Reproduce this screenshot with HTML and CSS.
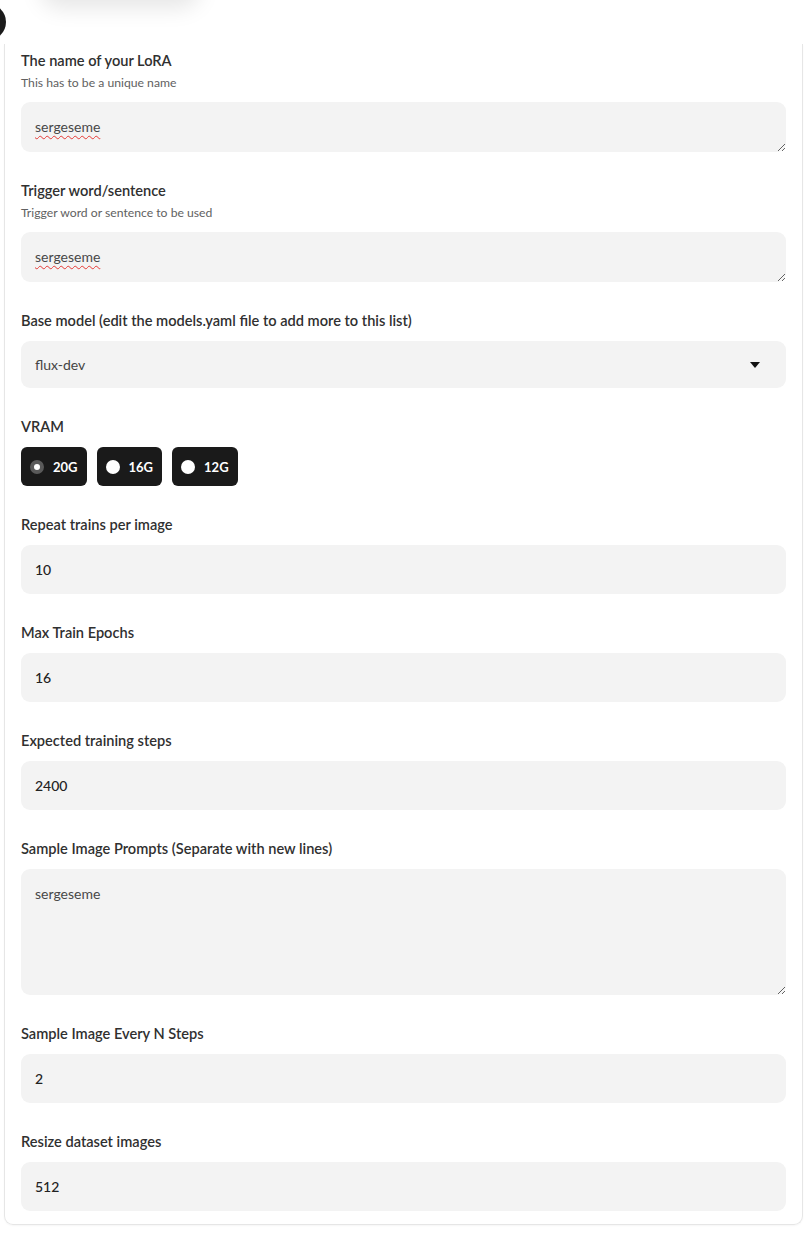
FILE: index.html
```html
<!DOCTYPE html>
<html>
<head>
<meta charset="utf-8">
<link rel="stylesheet" href="styles.css">
</head>
<body>
<div class="top-shadow"></div>
<div class="avatar"></div>
<div class="card">
  <div class="field">
    <div class="label with-info">The name of your LoRA</div>
    <div class="info">This has to be a unique name</div>
    <textarea class="ta ta-short spell" rows="1">sergeseme</textarea>
  </div>
  <div class="field">
    <div class="label with-info">Trigger word/sentence</div>
    <div class="info">Trigger word or sentence to be used</div>
    <textarea class="ta ta-short spell" rows="1">sergeseme</textarea>
  </div>
  <div class="field">
    <div class="label">Base model (edit the models.yaml file to add more to this list)</div>
    <div class="select">
      <span>flux-dev</span>
      <svg class="caret" width="10" height="6" viewBox="0 0 10 6"><path d="M0 0H10L5 6Z" fill="#111"/></svg>
    </div>
  </div>
  <div class="field">
    <div class="label">VRAM</div>
    <div class="radios">
      <div class="radio"><span class="dot dot-on"></span><span>20G</span></div>
      <div class="radio"><span class="dot"></span><span>16G</span></div>
      <div class="radio"><span class="dot"></span><span>12G</span></div>
    </div>
  </div>
  <div class="field">
    <div class="label">Repeat trains per image</div>
    <div class="input">10</div>
  </div>
  <div class="field">
    <div class="label">Max Train Epochs</div>
    <div class="input">16</div>
  </div>
  <div class="field">
    <div class="label">Expected training steps</div>
    <div class="input">2400</div>
  </div>
  <div class="field">
    <div class="label">Sample Image Prompts (Separate with new lines)</div>
    <textarea class="ta ta-tall" rows="4">sergeseme</textarea>
  </div>
  <div class="field">
    <div class="label">Sample Image Every N Steps</div>
    <div class="input">2</div>
  </div>
  <div class="field">
    <div class="label">Resize dataset images</div>
    <div class="input">512</div>
  </div>
</div>
</body>
</html>
```
FILE: styles.css
```css
html, body {
  margin: 0;
  padding: 0;
  background: #ffffff;
}
body {
  font-family: Lato, "Noto Sans", sans-serif;
  color: #333;
  position: relative;
  width: 808px;
  min-height: 1234px;
  overflow: hidden;
}
.top-shadow {
  position: absolute;
  left: 40px;
  top: -40px;
  width: 160px;
  height: 40px;
  border-radius: 20px;
  background: #fff;
  box-shadow: 0 8px 22px rgba(0,0,0,0.10);
}
.avatar {
  position: absolute;
  left: -30px;
  top: 4px;
  width: 36px;
  height: 36px;
  border-radius: 50%;
  background: #1b1b1b;
}
.card {
  margin: 44px 5px 0 4px;
  border: 1px solid #e6e6e6;
  border-top: none;
  border-radius: 0 0 9px 9px;
  padding: 7px 16px 13px 16px;
  box-shadow: 0 1px 2px rgba(0,0,0,0.04);
}
.field {
  margin-bottom: 29px;
}
.field:last-child {
  margin-bottom: 0;
}
.label {
  font-size: 14.6px;
  font-weight: 600;
  line-height: 20px;
  color: #303030;
  margin-bottom: 10px;
}
.label.with-info {
  margin-bottom: 4px;
}
.info {
  font-size: 12.2px;
  line-height: 16px;
  color: #616161;
  margin-bottom: 11px;
}
.ta {
  display: block;
  width: 100%;
  box-sizing: border-box;
  border: none;
  outline: none;
  background: #f3f3f3;
  border-radius: 9px;
  font-family: Lato, "Noto Sans", sans-serif;
  font-size: 14px;
  line-height: 20px;
  color: #484848;
  padding: 15px 14px;
  margin: 0;
  resize: vertical;
}
.ta-short {
  height: 50px;
}
.ta-tall {
  height: 126px;
}
.spell {
  text-decoration: underline wavy #e53935;
  text-decoration-thickness: 1px;
  text-underline-offset: 3px;
}
.select {
  height: 47px;
  background: #f3f3f3;
  border-radius: 9px;
  display: flex;
  align-items: center;
  justify-content: space-between;
  padding: 0 26px 0 14px;
  font-size: 14px;
  color: #444;
}
.caret {
  display: block;
  margin-top: 1px;
}
.radios {
  display: flex;
  gap: 10px;
}
.radio {
  height: 39px;
  background: #1a1a1a;
  border-radius: 6px;
  display: flex;
  align-items: center;
  gap: 9px;
  padding: 0 9px 0 9px;
  color: #fff;
  font-size: 13px;
  font-weight: 700;
}
.dot {
  width: 14px;
  height: 14px;
  border-radius: 50%;
  background: #fff;
  box-sizing: border-box;
}
.dot-on {
  background: #fff;
  border: 4.5px solid #5a5a5a;
}
.input {
  height: 49px;
  background: #f3f3f3;
  border-radius: 9px;
  display: flex;
  align-items: center;
  padding: 0 14px;
  font-size: 14px;
  font-weight: 500;
  color: #222;
}
```
